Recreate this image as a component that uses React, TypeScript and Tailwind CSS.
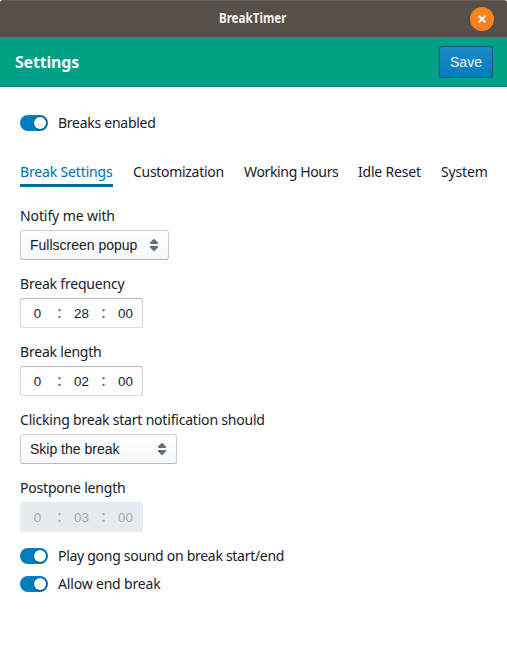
import type { ReactNode } from "react";

function Switch({ label, spacing }: { label: string; spacing: string }) {
  return (
    <label className="flex h-4 items-center gap-2.5">
      <span className="flex h-4 w-7 items-center justify-end rounded-full bg-[#007dbc] p-0.5">
        <span className="size-3 rounded-full bg-white shadow-[0_0_0_1px_rgba(16,22,26,0.2),0_1px_1px_rgba(16,22,26,0.2)]" />
      </span>
      <span className={`whitespace-nowrap ${spacing}`}>{label}</span>
    </label>
  );
}

function Field({ label, spacing, children }: { label: string; spacing: string; children: ReactNode }) {
  return (
    <div className="mb-[15px]">
      <div className="mb-[5px] flex h-[18px] items-center whitespace-nowrap">
        <span className={spacing}>{label}</span>
      </div>
      {children}
    </div>
  );
}

function Select({ value, width }: { value: string; width: string }) {
  return (
    <button
      className={`flex h-[30px] items-center justify-between rounded-[3px] bg-linear-to-b from-white to-[#f5f8fa] px-2.5 font-['Liberation_Sans',sans-serif] text-sm shadow-[inset_0_0_0_1px_rgba(16,22,26,0.2),inset_0_-1px_0_rgba(16,22,26,0.1)] ${width}`}
    >
      {value}
      <svg width="10" height="12" viewBox="0 0 10 12" fill="#5c7080">
        <path d="M1.800 5h6.400c.55 0 1-.4 1-.9a.9.9 0 0 0-.3-.6L5.700.3a1 1 0 0 0-1.400 0L1.100 3.500c-.2.200-.3.400-.3.600 0 .500.450.900 1 .900ZM8.200 7H1.800c-.55 0-1 .400-1 .900 0 .200.100.400.300.600l3.200 3.200a1 1 0 0 0 1.400 0l3.200-3.200c.2-.2.300-.4.300-.6 0-.5-.45-.9-1-.9Z" />
      </svg>
    </button>
  );
}

function TimeInput({ parts, disabled = false }: { parts: string[]; disabled?: boolean }) {
  const look = disabled
    ? "bg-[#e6ebef] text-[#a2adb5]"
    : "bg-white shadow-[inset_0_0_0_1px_rgba(16,22,26,0.16),inset_0_1px_1px_rgba(16,22,26,0.18)]";
  const colon = disabled ? "text-[#a2adb5]" : "text-[#5c7080]";
  return (
    <div className={`flex h-[30px] w-[123px] items-center rounded-[3px] pt-px font-['Liberation_Sans',sans-serif] text-[13.333px] ${look}`}>
      <span className="w-[35px] text-center">{parts[0]}</span>
      <span className={`w-[9px] pb-[3px] text-center font-['Noto_Sans',sans-serif] text-base font-medium ${colon}`}>:</span>
      <span className="w-[35px] text-center">{parts[1]}</span>
      <span className={`w-[9px] pb-[3px] text-center font-['Noto_Sans',sans-serif] text-base font-medium ${colon}`}>:</span>
      <span className="w-[35px] text-center">{parts[2]}</span>
    </div>
  );
}

export default function App() {
  return (
    <div className="h-[667px] w-[507px] overflow-hidden bg-white font-['Noto_Sans',sans-serif] text-sm text-[#182026]">
      <div className="grid h-[37px] grid-cols-[1fr_auto_1fr] items-center rounded-t-[3px] border-t border-[#655f5a] bg-[#574f4a]">
        <span />
        <span className="-mt-0.5 mr-px scale-x-[0.83] text-sm font-bold text-[#f2f1f0]">BreakTimer</span>
        <span className="mr-[13px] flex size-6 items-center justify-center justify-self-end rounded-full bg-[#f68220]">
          <svg width="8" height="8" viewBox="0 0 8 8" stroke="#f2f1f0" strokeWidth="2">
            <path d="m.7.7 6.600 6.600M7.300.7.7 7.300" />
          </svg>
        </span>
      </div>
      <header className="flex h-[50px] items-center justify-between bg-[#00a086] pr-3.5 pl-[15px] shadow-[inset_0_-1px_0_#008a75]">
        <h1 className="text-base font-bold text-[#f5f8fa] tracking-[-0.2px]">Settings</h1>
        <button className="h-8 w-[54px] rounded-[3px] bg-linear-to-b from-[#1a8bc5] to-[#007dbc] font-['Liberation_Sans',sans-serif] text-sm text-[#f5f8fa] shadow-[inset_0_0_0_1px_rgba(16,60,76,0.6)]">
          Save
        </button>
      </header>
      <main className="px-5 pt-7">
        <Switch label="Breaks enabled" spacing="tracking-[-0.27px]" />
        <nav className="mt-[26px] flex h-[30px] gap-5 leading-[30px] whitespace-nowrap">
          <span className="w-[93px] shrink-0 border-b-3 border-[#006ea5] text-[#006ea5] tracking-[-0.15px]">Break Settings</span>
          <span className="w-[91px] shrink-0 tracking-[-0.3px]">Customization</span>
          <span className="w-[94px] shrink-0 tracking-[-0.35px]">Working Hours</span>
          <span className="w-[63px] shrink-0 tracking-[-0.2px]">Idle Reset</span>
          <span className="shrink-0 tracking-[-0.15px]">System</span>
        </nav>
        <section className="pt-5">
          <Field label="Notify me with" spacing="tracking-[-0.1px]">
            <Select value="Fullscreen popup" width="w-[149px]" />
          </Field>
          <Field label="Break frequency" spacing="tracking-[-0.2px]">
            <TimeInput parts={["0", "28", "00"]} />
          </Field>
          <Field label="Break length" spacing="tracking-[-0.2px]">
            <TimeInput parts={["0", "02", "00"]} />
          </Field>
          <Field label="Clicking break start notification should" spacing="tracking-[-0.2px]">
            <Select value="Skip the break" width="w-[157px]" />
          </Field>
          <Field label="Postpone length" spacing="tracking-[-0.2px]">
            <TimeInput parts={["0", "03", "00"]} disabled />
          </Field>
          <div className="mt-4 flex flex-col gap-3">
            <Switch label="Play gong sound on break start/end" spacing="tracking-[-0.29px]" />
            <Switch label="Allow end break" spacing="tracking-[-0.18px]" />
          </div>
        </section>
      </main>
    </div>
  );
}
